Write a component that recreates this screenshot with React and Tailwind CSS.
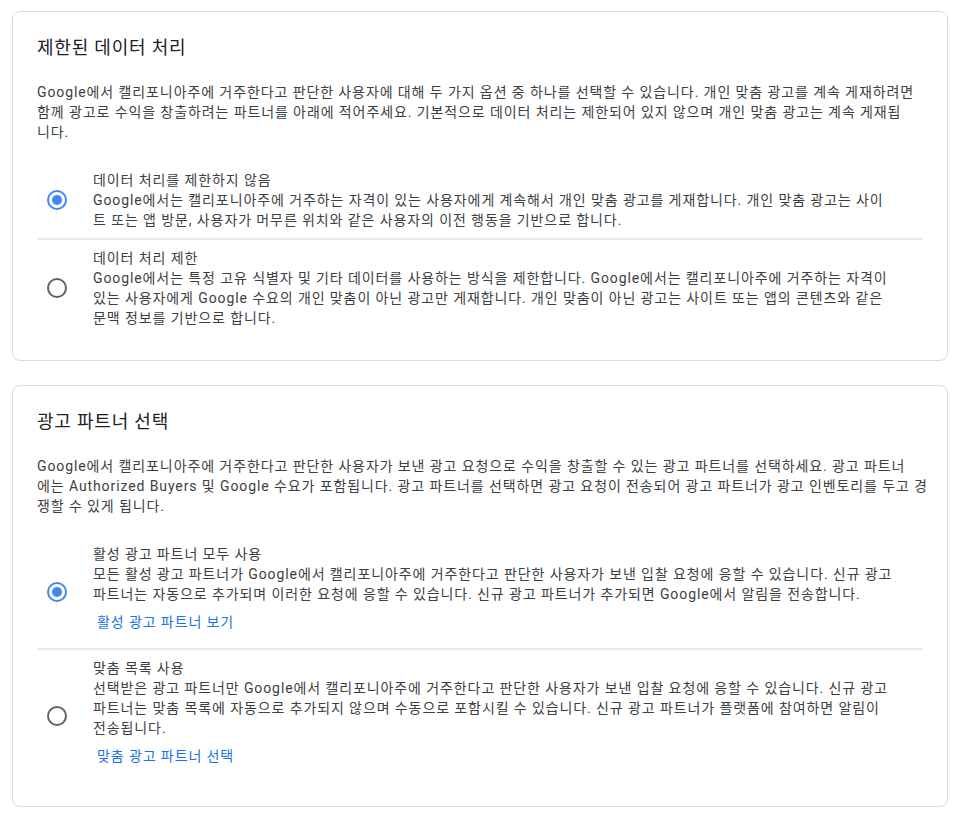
import React from 'react';

const Radio = ({ checked }) => (
  <div className="w-10 h-10 flex items-center justify-center shrink-0">
    <div
      className={`w-5 h-5 rounded-full border-2 flex items-center justify-center ${
        checked ? 'border-[#4285f4]' : 'border-[#5f6368]'
      }`}
    >
      {checked && <div className="w-2.5 h-2.5 rounded-full bg-[#4285f4]" />}
    </div>
  </div>
);

const Lines = ({ lines }) =>
  lines.map((l, i) => (
    <React.Fragment key={i}>
      {l}
      {i < lines.length - 1 && <br />}
    </React.Fragment>
  ));

const Option = ({ checked, label, lines, link, last }) => (
  <div className={`flex items-center py-2 ${last ? '' : 'border-b-2 border-[#e8eaed]'}`}>
    <Radio checked={checked} />
    <div className="ml-4 flex-1 min-w-0">
      <div className="text-[#3c4043] whitespace-nowrap">{label}</div>
      <div className="text-[#3c4043] whitespace-nowrap">
        <Lines lines={lines} />
      </div>
      {link && (
        <button className="h-9 px-1 text-[#1a73e8] text-sm tracking-[0.9px]">{link}</button>
      )}
    </div>
  </div>
);

const Card = ({ title, desc, options }) => (
  <div className="border border-[#dadce0] rounded-lg px-6 py-6 bg-white">
    <h2 className="text-[18px] leading-6 text-[#202124] tracking-[0.8px]">{title}</h2>
    <p className="mt-[22px] text-[#3c4043] whitespace-nowrap">
      <Lines lines={desc} />
    </p>
    <div className="mt-5">
      {options.map((o, i) => (
        <Option key={i} {...o} last={i === options.length - 1} />
      ))}
    </div>
  </div>
);

export default function App() {
  return (
    <div
      className="bg-white min-h-screen pl-3 pr-[18px] pt-[11px] pb-4 text-sm leading-5 tracking-[0.9px]"
      style={{ fontFamily: 'Roboto, "Noto Sans CJK KR", sans-serif' }}
    >
      <div className="flex flex-col gap-6">
        <Card
          title="제한된 데이터 처리"
          desc={[
            'Google에서 캘리포니아주에 거주한다고 판단한 사용자에 대해 두 가지 옵션 중 하나를 선택할 수 있습니다. 개인 맞춤 광고를 계속 게재하려면',
            '함께 광고로 수익을 창출하려는 파트너를 아래에 적어주세요. 기본적으로 데이터 처리는 제한되어 있지 않으며 개인 맞춤 광고는 계속 게재됩',
            '니다.',
          ]}
          options={[
            {
              checked: true,
              label: '데이터 처리를 제한하지 않음',
              lines: [
                'Google에서는 캘리포니아주에 거주하는 자격이 있는 사용자에게 계속해서 개인 맞춤 광고를 게재합니다. 개인 맞춤 광고는 사이',
                '트 또는 앱 방문, 사용자가 머무른 위치와 같은 사용자의 이전 행동을 기반으로 합니다.',
              ],
            },
            {
              checked: false,
              label: '데이터 처리 제한',
              lines: [
                'Google에서는 특정 고유 식별자 및 기타 데이터를 사용하는 방식을 제한합니다. Google에서는 캘리포니아주에 거주하는 자격이',
                '있는 사용자에게 Google 수요의 개인 맞춤이 아닌 광고만 게재합니다. 개인 맞춤이 아닌 광고는 사이트 또는 앱의 콘텐츠와 같은',
                '문맥 정보를 기반으로 합니다.',
              ],
            },
          ]}
        />
        <Card
          title="광고 파트너 선택"
          desc={[
            'Google에서 캘리포니아주에 거주한다고 판단한 사용자가 보낸 광고 요청으로 수익을 창출할 수 있는 광고 파트너를 선택하세요. 광고 파트너',
            '에는 Authorized Buyers 및 Google 수요가 포함됩니다. 광고 파트너를 선택하면 광고 요청이 전송되어 광고 파트너가 광고 인벤토리를 두고 경',
            '쟁할 수 있게 됩니다.',
          ]}
          options={[
            {
              checked: true,
              label: '활성 광고 파트너 모두 사용',
              lines: [
                '모든 활성 광고 파트너가 Google에서 캘리포니아주에 거주한다고 판단한 사용자가 보낸 입찰 요청에 응할 수 있습니다. 신규 광고',
                '파트너는 자동으로 추가되며 이러한 요청에 응할 수 있습니다. 신규 광고 파트너가 추가되면 Google에서 알림을 전송합니다.',
              ],
              link: '활성 광고 파트너 보기',
            },
            {
              checked: false,
              label: '맞춤 목록 사용',
              lines: [
                '선택받은 광고 파트너만 Google에서 캘리포니아주에 거주한다고 판단한 사용자가 보낸 입찰 요청에 응할 수 있습니다. 신규 광고',
                '파트너는 맞춤 목록에 자동으로 추가되지 않으며 수동으로 포함시킬 수 있습니다. 신규 광고 파트너가 플랫폼에 참여하면 알림이',
                '전송됩니다.',
              ],
              link: '맞춤 광고 파트너 선택',
            },
          ]}
        />
      </div>
    </div>
  );
}
